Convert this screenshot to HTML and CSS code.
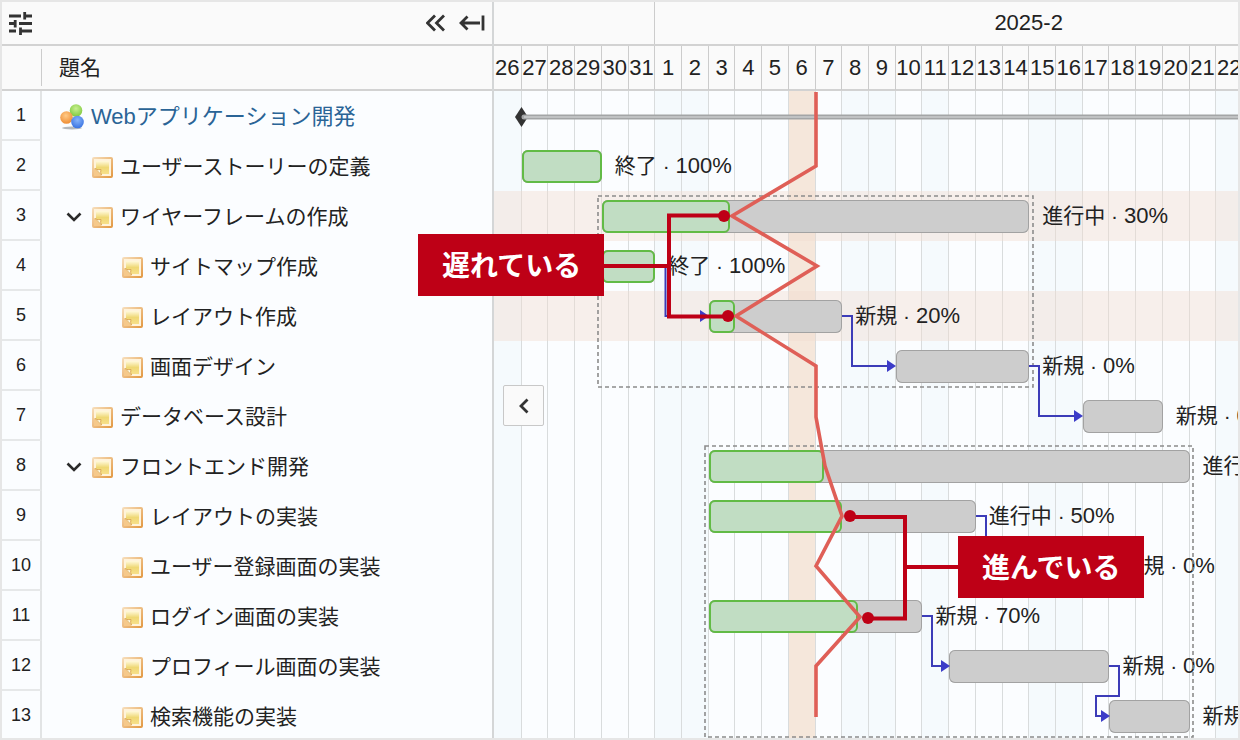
FILE: index.html
```html
<!DOCTYPE html>
<html lang="ja">
  <head>
    <meta charset="UTF-8" />
    <meta name="viewport" content="width=device-width, initial-scale=1.0" />
    <title>Webアプリケーション開発</title>
    <link rel="stylesheet" href="styles.css">
  </head>
  <body>
    <!-- shared icons -->
    <svg class="sprite" aria-hidden="true">
      <defs>
        <linearGradient id="frame" x1="0" y1="0" x2="1" y2="1">
          <stop offset="0" stop-color="#f6dcb8" />
          <stop offset="1" stop-color="#e39a45" />
        </linearGradient>
        <linearGradient id="paper" x1="0" y1="0" x2="0" y2="1">
          <stop offset="0" stop-color="#fff9dc" />
          <stop offset="0.5" stop-color="#efd874" />
          <stop offset="1" stop-color="#f7e08a" />
        </linearGradient>
        <radialGradient id="green" cx="0.5" cy="0.35" r="0.6">
          <stop offset="0" stop-color="#c8f090" />
          <stop offset="1" stop-color="#84cc44" />
        </radialGradient>
        <radialGradient id="orange" cx="0.45" cy="0.35" r="0.6">
          <stop offset="0" stop-color="#ffcb88" />
          <stop offset="1" stop-color="#f0923a" />
        </radialGradient>
        <radialGradient id="blue" cx="0.5" cy="0.35" r="0.6">
          <stop offset="0" stop-color="#86b4fa" />
          <stop offset="1" stop-color="#3f78e4" />
        </radialGradient>
      </defs>
      <symbol id="note" viewBox="0 0 21 21">
        <rect x="1" y="1" width="19" height="19" rx="1" fill="#fff3da" stroke="url(#frame)" stroke-width="2" />
        <path d="M4 4h13v13H9.500L4 11.500z" fill="url(#paper)" />
        <path d="M2 11l8 8H2z" fill="#f6c98a" />
        <path d="M3 11.500Q6 13.500 9 12.500Q8 15.500 9.500 18z" fill="#fffbe6" stroke="#dda955" />
      </symbol>
      <symbol id="project" viewBox="0 0 24 26">
        <ellipse cx="12" cy="24" rx="10" ry="1.500" fill="#b4b8bc" />
        <circle cx="16" cy="6.500" r="6.300" fill="url(#green)" />
        <circle cx="6.500" cy="13.500" r="6.300" fill="url(#orange)" />
        <circle cx="17.500" cy="18" r="6.300" fill="url(#blue)" />
      </symbol>
      <symbol id="down" viewBox="0 0 16 10">
        <path d="M1.500 1.500l6.500 6.500 6.500-6.500" fill="none" stroke="#2b2b2b" stroke-width="2.600" />
      </symbol>
    </svg>

    <main class="gantt">
      <section class="list">
        <div class="toolbar">
          <button class="tool" type="button" aria-label="設定">
            <svg width="23" height="23" viewBox="0 0 23 23">
              <path d="M0 4h12M15 4h8M15.700 0v7.500M0 11.500h7M6.200 8v7.600M10 11.500h13M0 19h7M11.500 15.500v7.500M12 19h11" />
            </svg>
          </button>
          <button class="tool fold" type="button" aria-label="折りたたむ">
            <svg width="19" height="18" viewBox="0 0 19 18">
              <path d="M9 1.500L1.500 9 9 16.500M18 1.500L10.500 9l7.500 7.500" />
            </svg>
          </button>
          <button class="tool" type="button" aria-label="列幅を縮める">
            <svg width="26" height="18" viewBox="0 0 26 18">
              <path d="M8.500 2.500L2 9l6.500 6.500M2 9h19M24 1.500v15" />
            </svg>
          </button>
        </div>
        <table class="tasks">
          <thead>
            <tr>
              <th class="num"><div class="divider"></div></th>
              <th class="subject">題名</th>
            </tr>
          </thead>
          <tbody>
            <tr>
              <td class="num">1</td>
              <td><div class="name root"><svg class="project-icon"><use href="#project" /></svg><a href="#">Webアプリケーション開発</a></div></td>
            </tr>
            <tr>
              <td class="num">2</td>
              <td><div class="name"><svg class="note"><use href="#note" /></svg>ユーザーストーリーの定義</div></td>
            </tr>
            <tr>
              <td class="num">3</td>
              <td><div class="name parent"><button class="toggle" type="button" aria-label="閉じる"><svg><use href="#down" /></svg></button><svg class="note"><use href="#note" /></svg>ワイヤーフレームの作成</div></td>
            </tr>
            <tr>
              <td class="num">4</td>
              <td><div class="name child"><svg class="note"><use href="#note" /></svg>サイトマップ作成</div></td>
            </tr>
            <tr>
              <td class="num">5</td>
              <td><div class="name child"><svg class="note"><use href="#note" /></svg>レイアウト作成</div></td>
            </tr>
            <tr>
              <td class="num">6</td>
              <td><div class="name child"><svg class="note"><use href="#note" /></svg>画面デザイン</div></td>
            </tr>
            <tr>
              <td class="num">7</td>
              <td><div class="name"><svg class="note"><use href="#note" /></svg>データベース設計</div></td>
            </tr>
            <tr>
              <td class="num">8</td>
              <td><div class="name parent"><button class="toggle" type="button" aria-label="閉じる"><svg><use href="#down" /></svg></button><svg class="note"><use href="#note" /></svg>フロントエンド開発</div></td>
            </tr>
            <tr>
              <td class="num">9</td>
              <td><div class="name child"><svg class="note"><use href="#note" /></svg>レイアウトの実装</div></td>
            </tr>
            <tr>
              <td class="num">10</td>
              <td><div class="name child"><svg class="note"><use href="#note" /></svg>ユーザー登録画面の実装</div></td>
            </tr>
            <tr>
              <td class="num">11</td>
              <td><div class="name child"><svg class="note"><use href="#note" /></svg>ログイン画面の実装</div></td>
            </tr>
            <tr>
              <td class="num">12</td>
              <td><div class="name child"><svg class="note"><use href="#note" /></svg>プロフィール画面の実装</div></td>
            </tr>
            <tr>
              <td class="num">13</td>
              <td><div class="name child"><svg class="note"><use href="#note" /></svg>検索機能の実装</div></td>
            </tr>
          </tbody>
        </table>
      </section>

      <section class="chart">
        <div class="timeline">
          <div class="months">
            <div class="month"><span>2025-2</span></div>
          </div>
          <div class="days">
            <span>26</span><span>27</span><span>28</span><span>29</span><span>30</span><span>31</span>
            <span>1</span><span>2</span><span>3</span><span>4</span><span>5</span><span>6</span><span>7</span>
            <span>8</span><span>9</span><span>10</span><span>11</span><span>12</span><span>13</span><span>14</span>
            <span>15</span><span>16</span><span>17</span><span>18</span><span>19</span><span>20</span><span>21</span>
            <span>22</span>
          </div>

          <div class="canvas">
            <div class="columns">
              <i class="off"></i><i></i><i></i><i></i><i></i><i></i>
              <i class="off"></i><i class="off"></i><i></i><i></i><i></i><i class="today"></i><i></i>
              <i class="off"></i><i class="off"></i><i></i><i class="off"></i><i></i><i></i><i></i>
              <i class="off"></i><i class="off"></i><i></i><i></i><i></i><i></i><i></i>
              <i class="off"></i>
            </div>

            <div class="rows">
              <div class="row"></div>
              <div class="row">
                <div class="bar" style="grid-column: 2 / 5"><div class="done" style="width: 100%"></div></div>
                <span class="label">終了 · <span class="rate">100%</span></span>
              </div>
              <div class="row late">
                <div class="bar" style="grid-column: 5 / 21"><div class="done" style="width: 30%"></div></div>
                <span class="label">進行中 · <span class="rate">30%</span></span>
              </div>
              <div class="row">
                <div class="bar" style="grid-column: 5 / 7"><div class="done" style="width: 100%"></div></div>
                <span class="label">終了 · <span class="rate">100%</span></span>
              </div>
              <div class="row late">
                <div class="bar" style="grid-column: 9 / 14"><div class="done" style="width: 20%"></div></div>
                <span class="label">新規 · <span class="rate">20%</span></span>
              </div>
              <div class="row">
                <div class="bar" style="grid-column: 16 / 21"></div>
                <span class="label">新規 · <span class="rate">0%</span></span>
              </div>
              <div class="row">
                <div class="bar" style="grid-column: 23 / 26"></div>
                <span class="label">新規 · <span class="rate">0%</span></span>
              </div>
              <div class="row">
                <div class="bar" style="grid-column: 9 / 27"><div class="done" style="width: 24%"></div></div>
                <span class="label">進行中 · <span class="rate">24%</span></span>
              </div>
              <div class="row">
                <div class="bar" style="grid-column: 9 / 19"><div class="done" style="width: 50%"></div></div>
                <span class="label">進行中 · <span class="rate">50%</span></span>
              </div>
              <div class="row">
                <div class="bar" style="grid-column: 20 / 24"></div>
                <span class="label">新規 · <span class="rate">0%</span></span>
              </div>
              <div class="row">
                <div class="bar" style="grid-column: 9 / 17"><div class="done" style="width: 70%"></div></div>
                <span class="label">新規 · <span class="rate">70%</span></span>
              </div>
              <div class="row">
                <div class="bar" style="grid-column: 18 / 24"></div>
                <span class="label">新規 · <span class="rate">0%</span></span>
              </div>
              <div class="row">
                <div class="bar" style="grid-column: 24 / 27"></div>
                <span class="label">新規 · <span class="rate">0%</span></span>
              </div>
            </div>

            <svg class="lines" viewBox="0 0 748 650" preserveAspectRatio="none" aria-hidden="true">
              <!-- project summary -->
              <path d="M27.500 16l6.500 10-6.500 10-6.500-10z" fill="#333" />
              <path d="M30 26h718" stroke="#a3a5a6" stroke-width="5" stroke-linecap="round" />
              <path d="M30 26h718" stroke="#c0c2c3" stroke-width="2" />

              <!-- parent groups -->
              <g class="group">
                <rect x="104" y="105" width="435" height="191" />
                <rect x="211" y="355" width="488" height="291" />
              </g>

              <!-- dependencies -->
              <g class="links">
                <path d="M161 175h10.500v50h36" />
                <path d="M348 225h10v50h36" />
                <path d="M535 275h10v50h36" />
                <path d="M482 425h10v50h10" />
                <path d="M428 525h10v50h10" />
                <path d="M615 575h10v30h-23v20h6" />
              </g>
              <g class="arrows">
                <path d="M206 219l9 6-9 6z" />
                <path d="M393 269l9 6-9 6z" />
                <path d="M580 319l9 6-9 6z" />
                <path d="M447 569l9 6-9 6z" />
                <path d="M607 619l9 6-9 6z" />
              </g>

              <!-- progress line -->
              <path class="progress" d="M322 1v74l-84 50 85 50-81 50 80 50v51l9 49 17 50-26 50 44 51-44 49v51" />

              <g class="pointer">
                <path d="M110 175h65M230 124.500h-55v101h59" />
                <path d="M356 426h55v101.500h-37M411 476h54" />
              </g>
              <g class="dots">
                <circle cx="230" cy="125" r="6" />
                <circle cx="234" cy="225" r="6" />
                <circle cx="356" cy="425" r="6" />
                <circle cx="374" cy="527" r="6" />
              </g>
            </svg>
          </div>
        </div>
        <button class="prev" type="button" aria-label="前へ">
          <svg width="10" height="16" viewBox="0 0 10 16"><path d="M8.500 1.500L2 8l6.500 6.500" /></svg>
        </button>
      </section>

      <div class="callout behind">遅れている</div>
      <div class="callout ahead">進んでいる</div>
    </main>
  </body>
</html>
```

FILE: styles.css
```css
* {
  box-sizing: border-box;
}

body {
  margin: 0;
  color: #222;
  font-family: "Liberation Sans", "Noto Sans CJK JP", sans-serif;
  font-size: 21px;
}

button {
  padding: 0;
  border: 0;
  background: none;
}

svg {
  display: block;
}

.sprite {
  position: absolute;
  width: 0;
  height: 0;
}

.gantt {
  position: relative;
  display: flex;
  height: 100vh;
  border: 2px solid #e6e6e6;
  background-color: #fbfdff;
  overflow: hidden;
}

/* task list */

.list {
  flex: 0 0 492px;
  border-right: 2px solid #d4d6d7;
}

.toolbar {
  display: flex;
  align-items: center;
  gap: 14px;
  height: 44px;
  padding: 0 7px;
  border-bottom: 2px solid #d2d2d2;
  background-color: #fafafa;
}

.tool path,
.prev path {
  fill: none;
  stroke: #333;
  stroke-width: 2.8;
}

.fold {
  margin-left: auto;
}

.tasks {
  width: 100%;
  border-spacing: 0;
}

.tasks th {
  height: 45px;
  padding: 0;
  border-bottom: 2px solid #d2d2d2;
  background-color: #fafafa;
  font-weight: normal;
  text-align: left;
}

.tasks .subject {
  padding: 0 0 3px 17px;
}

.divider {
  height: 37px;
  border-right: 1px solid #ccc;
}

.tasks td {
  height: 50px;
  padding: 2px 0 0;
}

.tasks .num {
  width: 40px;
}

.tasks td.num {
  padding: 0;
  border-right: 2px solid #e2e4e5;
  border-bottom: 2px solid #e6e8e9;
  font-size: 18px;
  text-align: center;
}

.name {
  display: flex;
  align-items: center;
  gap: 7px;
  padding-left: 50px;
  line-height: 30px;
  white-space: nowrap;
}

.root {
  padding-left: 18px;
  font-size: 22px;
}

.parent {
  padding-left: 24px;
}

.child {
  padding-left: 80px;
}

.name a {
  color: #2a6496;
  text-decoration: none;
}

.note {
  width: 21px;
  height: 21px;
}

.project-icon {
  width: 24px;
  height: 26px;
}

.toggle {
  margin-right: 3px;
}

.toggle svg {
  width: 16px;
  height: 10px;
}

/* chart */

.chart {
  position: relative;
  flex: 1;
  min-width: 0;
}

.timeline {
  margin-right: -4px;
}

.months,
.days,
.columns,
.row {
  display: grid;
  grid-template-columns: repeat(28, minmax(0, 1fr));
}

.months {
  height: 44px;
  border-bottom: 2px solid #d2d2d2;
  background-color: #fafafa;
  font-size: 22px;
  line-height: 41px;
}

.month {
  grid-column: 7 / 29;
  border-left: 1px solid #ccc;
}

/* the month goes on to the 28th, past the right edge */
.month span {
  display: block;
  width: calc(100% * 28 / 22);
  text-align: center;
}

.days {
  height: 45px;
  border-bottom: 2px solid #d2d2d2;
  background-color: #fafafa;
  font-size: 22px;
  line-height: 44px;
}

.days span {
  display: flex;
  justify-content: center;
  border-left: 1px solid #ccc;
}

.days span:first-child,
.columns i:first-child {
  border-left: 0;
}

.canvas {
  position: relative;
}

.columns {
  position: absolute;
  inset: 0;
}

.columns i {
  border-left: 1px solid #d9dcdd;
}

.columns .off {
  background-color: #f5fafd;
}

.columns .today {
  background-color: #f5e7db;
}

.rows {
  position: relative;
}

.row {
  height: 50px;
  align-items: center;
}

.late {
  background-color: rgba(240, 220, 208, 0.42);
}

.bar {
  height: 33px;
  margin: 0 -1px 0 1px;
  border-radius: 6px;
  background-color: #cdcdcd;
  box-shadow: inset 0 0 0 1px #a2a2a2;
}

.done {
  height: 100%;
  border: 2px solid #62bb46;
  border-radius: 6px;
  background-color: #c1ddc3;
}

.label {
  padding-left: 14px;
  line-height: 30px;
  white-space: nowrap;
}

.rate {
  font-size: 22px;
}

.lines {
  position: absolute;
  top: 0;
  left: 0;
  width: 100%;
  height: 100%;
  fill: none;
}

.group {
  stroke: #8c8c8c;
  stroke-width: 1.6;
  stroke-dasharray: 4 3;
}

.links {
  stroke: #3c3cb8;
  stroke-width: 2;
}

.arrows {
  fill: #3c3cc8;
}

.progress {
  stroke: #df5f57;
  stroke-width: 3.6;
}

.pointer {
  stroke: #be0016;
  stroke-width: 4;
}

.dots {
  fill: #be0016;
}

.prev {
  position: absolute;
  top: 383px;
  left: 9px;
  display: flex;
  align-items: center;
  justify-content: center;
  width: 41px;
  height: 41px;
  border: 1px solid #c8c8c8;
  border-radius: 2px;
  background-color: #fafafa;
}

.callout {
  position: absolute;
  padding: 0 23px 2px 24px;
  background-color: #be0016;
  color: #fff;
  font-family: "Noto Sans CJK JP", sans-serif;
  font-size: 28px;
  font-weight: bold;
  line-height: 60px;
  white-space: nowrap;
}

.behind {
  top: 232px;
  left: 416px;
}

.ahead {
  top: 534px;
  left: 956px;
}
```
